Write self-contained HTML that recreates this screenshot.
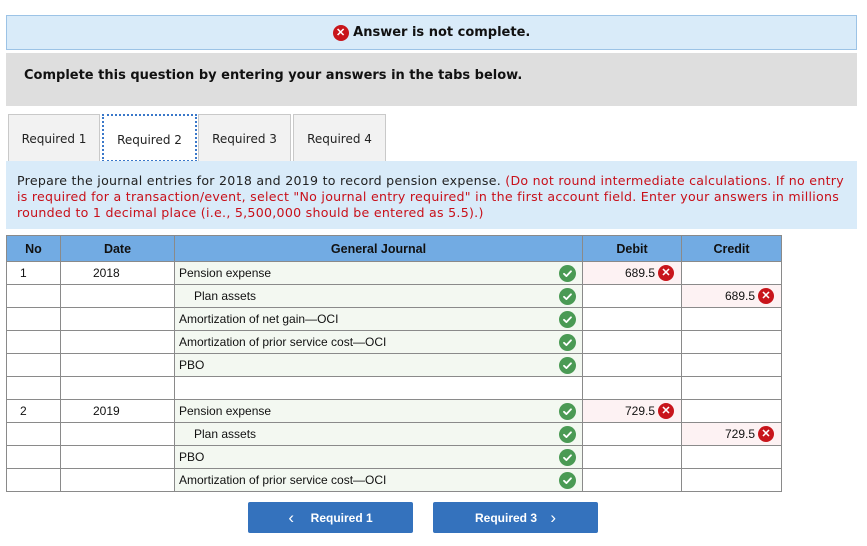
<!DOCTYPE html>
<html><head><meta charset="utf-8"><style>
*{margin:0;padding:0;box-sizing:border-box}
body{width:867px;height:546px;background:#fff;position:relative;font-family:"DejaVu Sans",Verdana,sans-serif;overflow:hidden}
.abs{position:absolute}
.banner{left:6px;top:15px;width:851px;height:35px;background:#d9ebf9;border:1px solid #9cc3e6;font-weight:bold;font-size:13px;text-align:center;line-height:34px;color:#111}
.xi{display:inline-block;width:16px;height:16px;border-radius:50%;background:#c8151b;color:#fff;font:bold 11px/16px "Liberation Sans",sans-serif;text-align:center;vertical-align:middle;letter-spacing:0}
.ok{display:inline-block;width:17px;height:17px;vertical-align:middle}
.gray{left:6px;top:53px;width:851px;height:53px;background:#dedede;font-weight:bold;font-size:13px;padding:15px 0 0 18px;color:#111}
.tab{top:114px;height:47px;background:#f2f2f2;border:1px solid #c9c9c9;border-bottom:none;font-size:12px;line-height:48px;text-align:center;color:#222}
.instr{left:6px;top:161px;width:851px;height:68px;background:#d9ebf9;font-size:12.6px;line-height:16px;padding:12px 0 0 11px;color:#222;white-space:nowrap;letter-spacing:0.27px}
.instr span{color:#c8101a}
table{position:absolute;left:6px;top:235px;border-collapse:collapse;font-family:"Liberation Sans",Arial,sans-serif;font-size:12px;color:#111}
td,th{border:1px solid #8a8a8a;height:23px;padding:0;position:relative}
th{background:#72abe3;height:26px;font-weight:bold;font-size:12.5px}
.g{background:#f3f8f1;padding-left:4px}
.g .ok{position:absolute;right:6px;top:3px}
.p{background:#fdf2f3;text-align:right;padding-right:26px}
.p .xi{position:absolute;right:7px;top:3px}
.btn{top:502px;width:165px;height:31px;background:#3472bd;border-radius:2px;color:#fff;font:bold 12px/31px "Liberation Sans",sans-serif;text-align:center}
.btn b{font-size:17px;font-weight:normal;vertical-align:-1px}
</style></head><body>
<div class="abs banner"><span class="xi">✕</span> Answer is not complete.</div>
<div class="abs gray">Complete this question by entering your answers in the tabs below.</div>
<div class="abs tab" style="left:8px;width:92px">Required 1</div>
<div class="abs tab" style="left:102px;width:95px;background:#fff;border:2px dotted #3a78c9;height:48px">Required 2</div>
<div class="abs tab" style="left:198px;width:93px">Required 3</div>
<div class="abs tab" style="left:293px;width:93px">Required 4</div>
<div class="abs instr">Prepare the journal entries for 2018 and 2019 to record pension expense. <span>(Do not round intermediate calculations. If no entry<br>is required for a transaction/event, select "No journal entry required" in the first account field. Enter your answers in millions<br>rounded to 1 decimal place (i.e., 5,500,000 should be entered as 5.5).)</span></div>
<table>
<colgroup><col style="width:54px"><col style="width:114px"><col style="width:408px"><col style="width:99px"><col style="width:100px"></colgroup>
<tr><th>No</th><th>Date</th><th>General Journal</th><th>Debit</th><th>Credit</th></tr>
<tr><td style="padding-left:13px">1</td><td style="padding-left:32px">2018</td><td class="g">Pension expense<svg class="ok" viewBox="0 0 17 17"><circle cx="8.5" cy="8.5" r="8.5" fill="#4a9a54"/><path d="M5 8.8l2.4 2.3 4.6-4.8" fill="none" stroke="#fff" stroke-width="1.8" stroke-linecap="round" stroke-linejoin="round"/></svg></td><td class="p">689.5<span class="xi">✕</span></td><td></td></tr>
<tr><td></td><td></td><td class="g" style="padding-left:19px">Plan assets<svg class="ok" viewBox="0 0 17 17"><circle cx="8.5" cy="8.5" r="8.5" fill="#4a9a54"/><path d="M5 8.8l2.4 2.3 4.6-4.8" fill="none" stroke="#fff" stroke-width="1.8" stroke-linecap="round" stroke-linejoin="round"/></svg></td><td></td><td class="p">689.5<span class="xi">✕</span></td></tr>
<tr><td></td><td></td><td class="g">Amortization of net gain—OCI<svg class="ok" viewBox="0 0 17 17"><circle cx="8.5" cy="8.5" r="8.5" fill="#4a9a54"/><path d="M5 8.8l2.4 2.3 4.6-4.8" fill="none" stroke="#fff" stroke-width="1.8" stroke-linecap="round" stroke-linejoin="round"/></svg></td><td></td><td></td></tr>
<tr><td></td><td></td><td class="g">Amortization of prior service cost—OCI<svg class="ok" viewBox="0 0 17 17"><circle cx="8.5" cy="8.5" r="8.5" fill="#4a9a54"/><path d="M5 8.8l2.4 2.3 4.6-4.8" fill="none" stroke="#fff" stroke-width="1.8" stroke-linecap="round" stroke-linejoin="round"/></svg></td><td></td><td></td></tr>
<tr><td></td><td></td><td class="g">PBO<svg class="ok" viewBox="0 0 17 17"><circle cx="8.5" cy="8.5" r="8.5" fill="#4a9a54"/><path d="M5 8.8l2.4 2.3 4.6-4.8" fill="none" stroke="#fff" stroke-width="1.8" stroke-linecap="round" stroke-linejoin="round"/></svg></td><td></td><td></td></tr>
<tr><td></td><td></td><td></td><td></td><td></td></tr>
<tr><td style="padding-left:13px">2</td><td style="padding-left:32px">2019</td><td class="g">Pension expense<svg class="ok" viewBox="0 0 17 17"><circle cx="8.5" cy="8.5" r="8.5" fill="#4a9a54"/><path d="M5 8.8l2.4 2.3 4.6-4.8" fill="none" stroke="#fff" stroke-width="1.8" stroke-linecap="round" stroke-linejoin="round"/></svg></td><td class="p">729.5<span class="xi">✕</span></td><td></td></tr>
<tr><td></td><td></td><td class="g" style="padding-left:19px">Plan assets<svg class="ok" viewBox="0 0 17 17"><circle cx="8.5" cy="8.5" r="8.5" fill="#4a9a54"/><path d="M5 8.8l2.4 2.3 4.6-4.8" fill="none" stroke="#fff" stroke-width="1.8" stroke-linecap="round" stroke-linejoin="round"/></svg></td><td></td><td class="p">729.5<span class="xi">✕</span></td></tr>
<tr><td></td><td></td><td class="g">PBO<svg class="ok" viewBox="0 0 17 17"><circle cx="8.5" cy="8.5" r="8.5" fill="#4a9a54"/><path d="M5 8.8l2.4 2.3 4.6-4.8" fill="none" stroke="#fff" stroke-width="1.8" stroke-linecap="round" stroke-linejoin="round"/></svg></td><td></td><td></td></tr>
<tr><td></td><td></td><td class="g">Amortization of prior service cost—OCI<svg class="ok" viewBox="0 0 17 17"><circle cx="8.5" cy="8.5" r="8.5" fill="#4a9a54"/><path d="M5 8.8l2.4 2.3 4.6-4.8" fill="none" stroke="#fff" stroke-width="1.8" stroke-linecap="round" stroke-linejoin="round"/></svg></td><td></td><td></td></tr>
</table>
<div class="abs btn" style="left:248px"><b>&lsaquo;</b>&nbsp;&nbsp;&nbsp;&nbsp; Required 1</div>
<div class="abs btn" style="left:433px">Required 3 &nbsp;&nbsp;&nbsp;<b>&rsaquo;</b></div>
</body></html>
